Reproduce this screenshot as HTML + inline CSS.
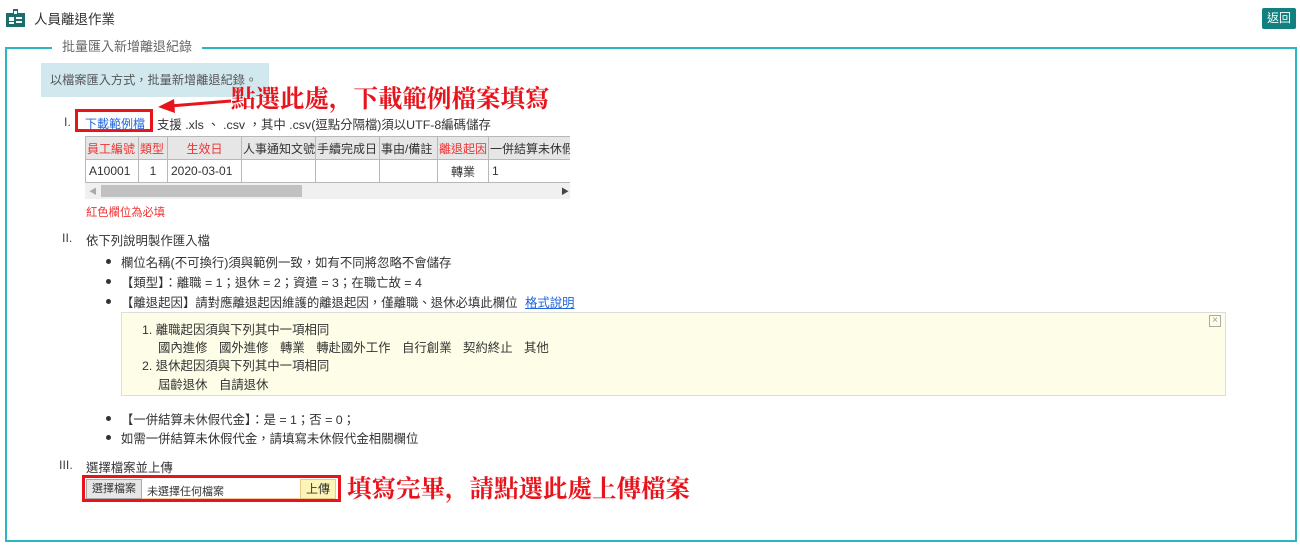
<!DOCTYPE html>
<html><head><meta charset="utf-8"><style>
*{margin:0;padding:0;box-sizing:border-box}
body{width:1300px;height:545px;background:#fff;position:relative;font-family:"Liberation Sans","Noto Sans CJK TC",sans-serif;font-size:12.4px;color:#333;overflow:hidden}
.a{position:absolute;white-space:nowrap}
.ann{position:absolute;color:#e8141c;font-family:"Liberation Serif","Noto Serif CJK SC",serif;font-weight:bold;font-size:24.5px;line-height:30px;white-space:nowrap}
.tw{position:absolute;left:85px;top:136px;width:485px;overflow:hidden}
table{border-collapse:collapse;table-layout:fixed;width:570px}
td{border:1px solid #b8b8b8;height:23px;padding:0 1px;font-size:12px;white-space:nowrap;overflow:hidden}
.h td{background:#e6e6e6;color:#333}
.r{color:#e33 !important}
.dot{position:absolute;width:5px;height:5px;border-radius:50%;background:#333}
</style></head><body>
<svg class="a" style="left:6px;top:9px" width="19" height="18" viewBox="0 0 19 18"><rect x="0" y="4" width="19" height="14" fill="#1a6e6b"/><rect x="7" y="0" width="5" height="6" fill="#1a6e6b"/><rect x="8" y="2" width="3" height="3" fill="#fff"/><rect x="3" y="8" width="5" height="4" fill="#fff"/><rect x="10" y="8" width="6" height="2" fill="#fff"/><rect x="10" y="12" width="6" height="2" fill="#fff"/><rect x="3" y="13" width="5" height="2" fill="#fff"/></svg>
<div class="a" style="left:34px;top:8px;font-size:13.5px;color:#333">人員離退作業</div>
<div class="a" style="left:1262px;top:8px;width:34px;height:21px;background:#12807f;color:#fff;border-radius:2px;text-align:center;line-height:21px;font-size:12px">返回</div>
<div class="a" style="left:5px;top:47px;width:1292px;height:495px;border:2px solid #2bb7c2"></div>
<div class="a" style="left:52px;top:39px;padding:0 10px;background:#fff;color:#666;font-size:13px;line-height:16px">批量匯入新增離退紀錄</div>
<div class="a" style="left:41px;top:63px;width:228px;height:34px;background:#d1e8ef;color:#555;line-height:34px;padding-left:9px;font-size:12.2px">以檔案匯入方式，批量新增離退紀錄。</div>
<div class="ann" style="left:231px;top:85px">點選此處，下載範例檔案填寫</div>
<svg class="a" style="left:158px;top:96px" width="74" height="18"><line x1="12" y1="10" x2="73" y2="5" stroke="#e8141c" stroke-width="3"/><polygon points="0,11 16,3 17,17" fill="#e8141c"/></svg>
<div class="a" style="left:75px;top:109px;width:78px;height:23px;border:3px solid #e8141c"></div>
<div class="a" style="left:64px;top:115px;color:#444">I.</div>
<div class="a" style="left:85px;top:115px;color:#2266dd;text-decoration:underline;font-size:12px">下載範例檔</div>
<div class="a" style="left:157px;top:115px;color:#333">支援 .xls 、 .csv ，其中 .csv(逗點分隔檔)須以UTF-8編碼儲存</div>
<div class="tw"><table>
<colgroup><col style="width:53px"><col style="width:29px"><col style="width:74px"><col style="width:74px"><col style="width:64px"><col style="width:58px"><col style="width:51px"><col style="width:167px"></colgroup>
<tr class="h"><td class="r">員工編號</td><td class="r">類型</td><td class="r" style="text-align:center">生效日</td><td>人事通知文號</td><td>手續完成日</td><td>事由/備註</td><td class="r">離退起因</td><td>一併結算未休假代金</td></tr>
<tr><td style="padding-left:3px">A10001</td><td style="text-align:center">1</td><td style="padding-left:3px">2020-03-01</td><td></td><td></td><td></td><td style="text-align:center">轉業</td><td style="padding-left:3px">1</td></tr>
</table></div>
<div class="a" style="left:85px;top:183px;width:485px;height:16px;background:#f0f0f0"></div>
<div class="a" style="left:101px;top:185px;width:201px;height:12px;background:#c1c1c1"></div>
<div class="a" style="left:89px;top:186px;color:#aaa;font-size:8px">◀</div>
<div class="a" style="left:561px;top:186px;color:#444;font-size:8px">▶</div>
<div class="a" style="left:86px;top:204px;color:#e33;font-size:11.3px">紅色欄位為必填</div>
<div class="a" style="left:62px;top:231px;color:#444">II.</div>
<div class="a" style="left:86px;top:231px">依下列說明製作匯入檔</div>
<div class="dot" style="left:106px;top:259px"></div><div class="a" style="left:121px;top:253px">欄位名稱(不可換行)須與範例一致，如有不同將忽略不會儲存</div>
<div class="dot" style="left:106px;top:279px"></div><div class="a" style="left:121px;top:273px">【類型】：離職 = 1；退休 = 2；資遣 = 3；在職亡故 = 4</div>
<div class="dot" style="left:106px;top:299px"></div><div class="a" style="left:121px;top:293px">【離退起因】請對應離退起因維護的離退起因，僅離職、退休必填此欄位 <span style="color:#2266dd;text-decoration:underline;margin-left:4px">格式說明</span></div>
<div class="a" style="left:121px;top:312px;width:1105px;height:84px;background:#fefee8;border:1px solid #ddd"></div>
<div class="a" style="left:1209px;top:315px;width:12px;height:12px;border:1px solid #aaa;color:#999;font-size:10px;line-height:10px;text-align:center">×</div>
<div class="a" style="left:142px;top:320px">1. 離職起因須與下列其中一項相同</div>
<div class="a" style="left:158px;top:338px;word-spacing:8px">國內進修 國外進修 轉業 轉赴國外工作 自行創業 契約終止 其他</div>
<div class="a" style="left:142px;top:356px">2. 退休起因須與下列其中一項相同</div>
<div class="a" style="left:158px;top:375px;word-spacing:8px">屆齡退休 自請退休</div>
<div class="dot" style="left:106px;top:416px"></div><div class="a" style="left:121px;top:410px">【一併結算未休假代金】：是 = 1；否 = 0；</div>
<div class="dot" style="left:106px;top:435px"></div><div class="a" style="left:121px;top:429px">如需一併結算未休假代金，請填寫未休假代金相關欄位</div>
<div class="a" style="left:59px;top:458px;color:#444">III.</div>
<div class="a" style="left:86px;top:458px">選擇檔案並上傳</div>
<div class="a" style="left:82px;top:475px;width:259px;height:27px;border:3px solid #e8141c"></div>
<div class="a" style="left:85px;top:478px;width:215px;height:21px;background:#fff;border-bottom:1px solid #f5c9a0"></div>
<div class="a" style="left:86px;top:479px;width:56px;height:20px;background:#e6e6e6;border:1px solid #aaa;font-size:11px;line-height:18px;text-align:center">選擇檔案</div>
<div class="a" style="left:147px;top:483px;font-size:11px">未選擇任何檔案</div>
<div class="a" style="left:300px;top:479px;width:36px;height:20px;background:#fdf4b8;border:1px solid #e7c98a;font-size:12px;line-height:18px;text-align:center">上傳</div>
<div class="ann" style="left:347px;top:475px">填寫完畢，請點選此處上傳檔案</div>
</body></html>
